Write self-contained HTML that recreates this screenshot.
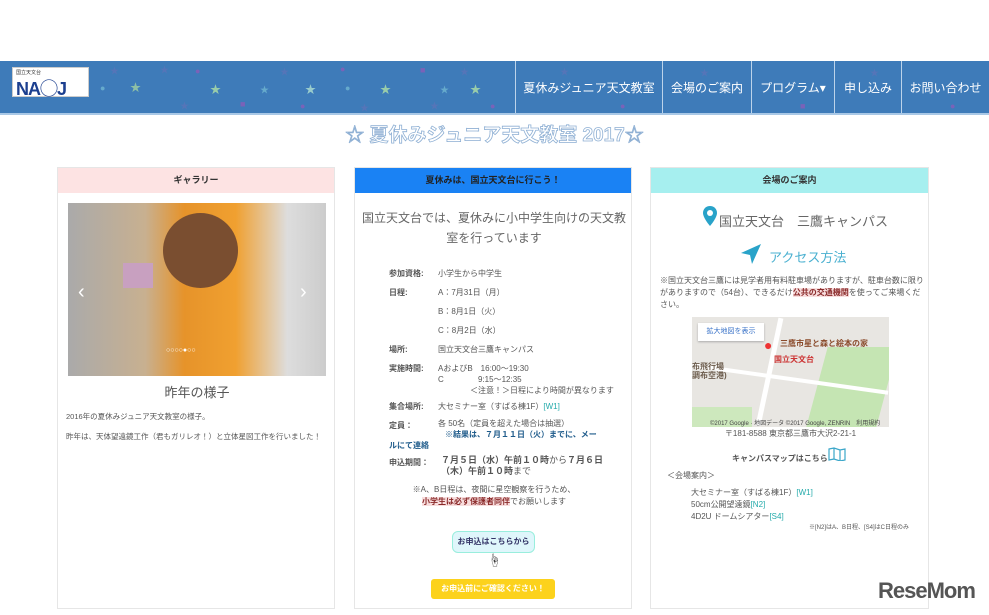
<!DOCTYPE html><html><head><meta charset="utf-8"><style>
*{margin:0;padding:0;box-sizing:border-box}
body{width:989px;height:615px;background:#fff;font-family:"Liberation Sans","Noto Sans CJK JP",sans-serif;color:#555;position:relative;overflow:hidden}
.a{position:absolute}
.nav{left:0;top:61px;width:989px;height:54px;background:#3e7bb9;border-bottom:2px solid #a9c8e6;overflow:hidden}
.ni{top:0;height:54px;border-left:1px solid #bcd3ea;color:#fff;font-size:12px;line-height:54px;text-align:center}
.pn{border:1px solid #e6e6e6;background:#fff}
.ph{position:absolute;left:0;top:0;right:0;height:25px;font-size:9px;font-weight:bold;text-align:center;line-height:25px;color:#333}
.s{font-size:8px;color:#555;position:absolute;white-space:nowrap}
.b{font-weight:bold}
.star{color:#9cc;font-size:11px;position:absolute}
.d{position:absolute;font-size:9px}
</style></head><body>
<div class="a nav">
<span class="star" style="left:130px;top:18px;color:#8dbfa6">★</span><span class="star" style="left:210px;top:20px;color:#9ca">★</span><span class="star" style="left:305px;top:20px">★</span><span class="star" style="left:380px;top:20px;color:#9ca">★</span><span class="star" style="left:470px;top:20px;color:#9ca">★</span>
<span class="d" style="left:110px;top:3px;color:#5575b8">★</span><span class="d" style="left:160px;top:2px;color:#5575b8">★</span><span class="d" style="left:195px;top:5px;color:#7a62b8">●</span><span class="d" style="left:240px;top:38px;color:#7a62b8">■</span><span class="d" style="left:280px;top:4px;color:#5575b8">★</span><span class="d" style="left:340px;top:3px;color:#7a62b8">●</span><span class="d" style="left:430px;top:38px;color:#5575b8">★</span><span class="d" style="left:180px;top:38px;color:#5575b8">★</span><span class="d" style="left:300px;top:40px;color:#7a62b8">●</span><span class="d" style="left:360px;top:40px;color:#5575b8">★</span><span class="d" style="left:420px;top:4px;color:#7a62b8">■</span><span class="d" style="left:460px;top:4px;color:#5575b8">★</span><span class="d" style="left:490px;top:40px;color:#7a62b8">●</span><span class="d" style="left:100px;top:22px;color:#6ac">●</span><span class="d" style="left:260px;top:22px;color:#6ac">★</span><span class="d" style="left:345px;top:22px;color:#6ac">●</span><span class="d" style="left:440px;top:22px;color:#6ac">★</span><span class="d" style="left:560px;top:4px;color:#5575b8">★</span><span class="d" style="left:620px;top:40px;color:#7a62b8">●</span><span class="d" style="left:700px;top:5px;color:#5575b8">★</span><span class="d" style="left:800px;top:40px;color:#7a62b8">■</span><span class="d" style="left:870px;top:5px;color:#5575b8">★</span><span class="d" style="left:950px;top:40px;color:#7a62b8">●</span>
<div class="a" style="left:12px;top:6px;width:77px;height:30px;background:#fff;border:1px solid #ccc"><div class="a" style="left:3px;top:1px;font-size:5px;color:#333">国立天文台</div><div class="a" style="left:3px;top:7px;font-size:18px;font-weight:bold;color:#1c3f8f;letter-spacing:-1px">NA◯J</div></div>
<div class="a ni" style="left:515px;width:147px">夏休みジュニア天文教室</div>
<div class="a ni" style="left:662px;width:89px">会場のご案内</div>
<div class="a ni" style="left:751px;width:83px">プログラム▾</div>
<div class="a ni" style="left:834px;width:67px">申し込み</div>
<div class="a ni" style="left:901px;width:88px">お問い合わせ</div>
</div>
<div class="a" style="left:0;top:120px;width:989px;text-align:center;font-size:19px;font-weight:bold;color:#fff;-webkit-text-stroke:0.8px #8fb0d4">☆ 夏休みジュニア天文教室 2017☆</div>

<div class="a pn" style="left:57px;top:167px;width:278px;height:442px">
<div class="ph" style="background:#fde3e3">ギャラリー</div>
<div class="a" style="left:10px;top:35px;width:258px;height:173px;background:linear-gradient(90deg,#aaa 0%,#c8b090 30%,#e6932a 45%,#f0a030 65%,#ddd 85%,#ccc 100%);overflow:hidden">
<div class="a" style="left:95px;top:10px;width:75px;height:75px;border-radius:40px;background:#7a4e30"></div>
<div class="a" style="left:55px;top:60px;width:30px;height:25px;background:#c8a0c0"></div>
<div class="a" style="left:10px;top:78px;font-size:20px;color:#fff">‹</div><div class="a" style="left:232px;top:78px;font-size:20px;color:#fff">›</div>
<div class="a" style="left:98px;top:144px;font-size:7px;color:#fff;letter-spacing:0">○○○○●○○</div></div>
<div class="a" style="left:0;top:214px;width:278px;text-align:center;font-size:13px;color:#555">昨年の様子</div>
<div class="s" style="left:8px;top:243px;font-size:7.5px">2016年の夏休みジュニア天文教室の様子。</div>
<div class="s" style="left:8px;top:263px;font-size:7.5px">昨年は、天体望遠鏡工作（君もガリレオ！）と立体星図工作を行いました！</div>
</div>

<div class="a pn" style="left:354px;top:167px;width:278px;height:442px">
<div class="ph" style="background:#1a82f4;color:#222">夏休みは、国立天文台に行こう！</div>
<div class="a" style="left:0;top:40px;width:278px;text-align:center;font-size:12px;line-height:20px;color:#666">国立天文台では、夏休みに小中学生向けの天文教<br>室を行っています</div>
<div class="s b" style="left:34px;top:100px">参加資格:</div><div class="s" style="left:83px;top:100px">小学生から中学生</div>
<div class="s b" style="left:34px;top:119px">日程:</div><div class="s" style="left:83px;top:119px">A：7月31日（月）</div>
<div class="s" style="left:83px;top:138px">B：8月1日（火）</div><div class="s" style="left:83px;top:157px">C：8月2日（水）</div>
<div class="s b" style="left:34px;top:176px">場所:</div><div class="s" style="left:83px;top:176px">国立天文台三鷹キャンパス</div>
<div class="s b" style="left:34px;top:195px">実施時間:</div><div class="s" style="left:83px;top:195px;line-height:11px">AおよびB　16:00〜19:30<br>C　　　　 9:15〜12:35<br>　　　　＜注意！＞日程により時間が異なります</div>
<div class="s b" style="left:34px;top:233px">集合場所:</div><div class="s" style="left:83px;top:233px">大セミナー室（すばる棟1F）<span style="color:#2aa">[W1]</span></div>
<div class="s b" style="left:34px;top:252px">定員：</div><div class="s" style="left:83px;top:250px">各 50名（定員を超えた場合は抽選）</div>
<div class="s b" style="left:90px;top:261px;color:#1d5a8a">※結果は、７月１１日（火）までに、メー</div>
<div class="s b" style="left:34px;top:272px;color:#1d5a8a">ルにて連絡</div>
<div class="s b" style="left:34px;top:289px">申込期間：</div><div class="s b" style="left:86px;top:287px;font-size:9px;line-height:11px">７月５日（水）午前１０時<span style="font-weight:normal">から</span>７月６日<br>（木）午前１０時<span style="font-weight:normal">まで</span></div>
<div class="s" style="left:0;width:278px;text-align:center;top:316px;line-height:12px">※A、B日程は、夜間に星空観察を行うため、<br><span style="background:#f8dede;color:#8a2a2a;font-weight:bold">小学生は必ず保護者同伴</span>でお願いします</div>
<div class="a" style="left:97px;top:363px;width:83px;height:22px;border:1px solid #9ed;border-radius:6px;background:#dff6fb;font-size:8px;font-weight:bold;text-align:center;line-height:20px;color:#336">お申込はこちらから</div>
<div class="a" style="left:133px;top:382px;font-size:13px;color:#333">☝</div>
<div class="a" style="left:76px;top:411px;width:124px;height:20px;background:#fcd21c;border-radius:3px;font-size:8px;font-weight:bold;color:#fff;text-align:center;line-height:20px">お申込前にご確認ください！</div>
</div>

<div class="a pn" style="left:650px;top:167px;width:279px;height:442px">
<div class="ph" style="background:#a6efef">会場のご案内</div>
<div class="a" style="left:52px;top:38px"><svg width="14" height="20" viewBox="0 0 14 20"><path d="M7 0C3 0 0 3 0 7c0 5 7 13 7 13s7-8 7-13c0-4-3-7-7-7z" fill="#29a3c9"/><circle cx="7" cy="7" r="3" fill="#fff"/></svg></div>
<div class="a" style="left:68px;top:43px;font-size:13px;color:#666">国立天文台　三鷹キャンパス</div>
<div class="a" style="left:90px;top:76px"><svg width="20" height="20" viewBox="0 0 20 20"><path d="M20 0L0 9l9 2 2 9z" fill="#29a3c9"/></svg></div>
<div class="a" style="left:118px;top:79px;font-size:13px;color:#4ab0d0">アクセス方法</div>
<div class="s" style="left:9px;top:107px;line-height:12px;white-space:normal;width:265px">※国立天文台三鷹には見学者用有料駐車場がありますが、駐車台数に限りがありますので（54台）、できるだけ<b style="background:#f8dede;color:#8a2a2a">公共の交通機関</b>を使ってご来場ください。</div>
<div class="a" style="left:41px;top:149px;width:197px;height:110px;background:#e8e6e2;overflow:hidden">
<div class="a" style="left:125px;top:30px;width:70px;height:80px;background:#c5e5b3;transform:skewX(-15deg)"></div>
<div class="a" style="left:0;top:90px;width:60px;height:20px;background:#cde8bd"></div>
<div class="a" style="left:75px;top:0;width:5px;height:110px;background:#fff;transform:rotate(12deg)"></div>
<div class="a" style="left:0;top:60px;width:197px;height:4px;background:#fff;transform:rotate(8deg)"></div>
<div class="a" style="left:6px;top:6px;width:66px;height:18px;background:#fff;font-size:7px;color:#3a73c8;line-height:18px;text-align:center;box-shadow:0 1px 2px #aaa">拡大地図を表示</div>
<div class="a" style="left:72px;top:20px;font-size:14px;color:#e33">●</div>
<div class="a" style="left:88px;top:21px;font-size:8px;color:#8a4a2a;font-weight:bold">三鷹市星と森と絵本の家</div>
<div class="a" style="left:82px;top:37px;font-size:8px;color:#c33;font-weight:bold">国立天文台</div>
<div class="a" style="left:0;top:45px;font-size:8px;color:#6a5a4a;font-weight:bold;line-height:9px">布飛行場<br>調布空港)</div>
<div class="a" style="left:18px;top:101px;font-size:6px;color:#444">©2017 Google · 地図データ ©2017 Google, ZENRIN　利用規約</div></div>
<div class="s" style="left:0;width:279px;text-align:center;top:260px">〒181-8588 東京都三鷹市大沢2-21-1</div>
<div class="s b" style="left:81px;top:285px">キャンパスマップはこちら</div>
<div class="a" style="left:177px;top:279px"><svg width="18" height="14" viewBox="0 0 18 14"><path d="M1 2l5-1 6 2 5-1v11l-5 1-6-2-5 1z M6 1v11 M12 3v11" fill="none" stroke="#3aa6c9" stroke-width="1.2"/></svg></div>
<div class="s" style="left:16px;top:302px">＜会場案内＞</div>
<div class="s" style="left:40px;top:319px;line-height:12px">大セミナー室（すばる棟1F）<span style="color:#2aa">[W1]</span><br>50cm公開望遠鏡<span style="color:#2aa">[N2]</span><br>4D2U ドームシアター<span style="color:#2aa">[S4]</span></div>
<div class="s" style="left:158px;top:354px;font-size:6px">※[N2]はA、B日程、[S4]はC日程のみ</div>
</div>
<div class="a" style="left:878px;top:578px;font-size:22px;font-weight:bold;color:#555;letter-spacing:-1px">ReseMom</div>
</body></html>
